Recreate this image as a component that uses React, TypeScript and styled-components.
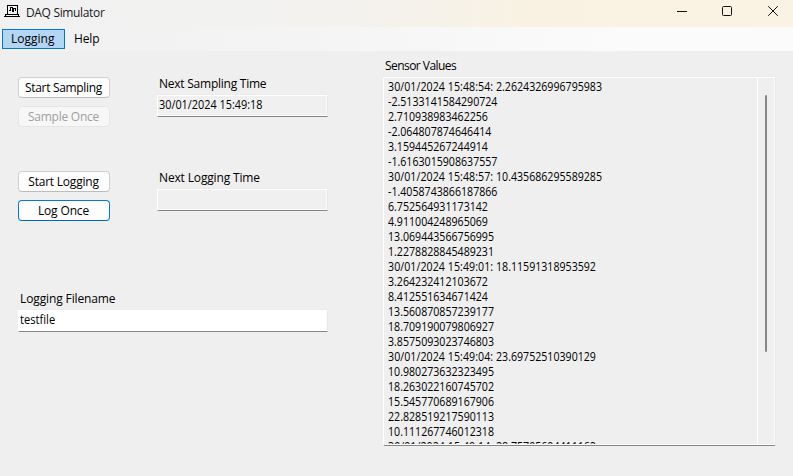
import React from 'react';
import styled, { createGlobalStyle, css } from 'styled-components';

const Global = createGlobalStyle`
  * { box-sizing: border-box; }
  body { margin: 0; background: #f0f0f0; overflow: hidden; }
  button, input { font: inherit; color: inherit; }
`;

const Window = styled.div`
  width: 793px;
  height: 476px;
  display: flex;
  flex-direction: column;
  background: #efefef;
  color: #000;
  font: 12px/15px "Open Sans", "Noto Sans", sans-serif;
`;

const TitleBar = styled.header`
  height: 27px;
  flex: none;
  display: flex;
  align-items: center;
  background: linear-gradient(90deg, #f1f1f1 0, #f2f2f1 240px, #f5f2ec 400px, #f9f2e3 530px, #faf2e2 100%);
`;

const AppIcon = styled.svg`
  width: 16px;
  height: 13px;
  margin: 0 6px 4px 4px;
`;

const Title = styled.span`
  flex: 1;
  letter-spacing: -0.34px;
  padding-bottom: 3px;
  color: #1a1a1a;
`;

const WindowControls = styled.svg`
  width: 116px;
  height: 22px;
  margin-bottom: 5px;
`;

const MenuBar = styled.nav`
  height: 24px;
  flex: none;
  display: flex;
  padding: 2px 0 2px 2px;
  background: linear-gradient(90deg, #f1f1f1 0, #f2f2f2 170px, #f8f8f8 480px, #fbfbfb 640px, #fbfbfb 100%);
`;

const MenuItem = styled.div<{ $active?: boolean; $spacing?: number }>`
  height: 20px;
  padding: 1px 8px;
  border: 1px solid transparent;
  white-space: pre;
  letter-spacing: ${(p) => p.$spacing ?? 0}px;
  ${(p) => p.$active && css`
    width: 63px;
    border-color: #0078d7;
    background: #b3d7f3;
  `}
`;

const Content = styled.main`
  flex: 1;
  min-height: 0;
  display: grid;
  grid-template-columns: 310px 393px;
  column-gap: 55px;
  padding-left: 18px;
`;

const Controls = styled.section`
  display: flex;
  flex-direction: column;
`;

const ControlRow = styled.div`
  height: 94px;
  display: grid;
  grid-template-columns: 92px 171px;
  column-gap: 47px;
  &:first-child { margin-top: 25px; }
`;

const ButtonStack = styled.div`
  display: flex;
  flex-direction: column;
  gap: 8px;
  padding-top: 1px;
`;

const Button = styled.button<{ $focus?: boolean; $spacing: number }>`
  width: 92px;
  height: 21px;
  padding: 1px 1px 0 0;
  border: 1px solid ${(p) => (p.$focus ? '#0078d4' : '#d0d0d0')};
  border-bottom-color: ${(p) => (p.$focus ? '#0067c0' : '#bcbcbc')};
  border-radius: 4px;
  background: #fdfdfd;
  line-height: 18px;
  letter-spacing: ${(p) => p.$spacing}px;
  white-space: pre;
  &:disabled {
    color: #a0a0a0;
    background: #f7f7f7;
    border-color: #e6e6e6;
  }
`;

const Field = styled.label`
  display: flex;
  flex-direction: column;
`;

const Label = styled.span<{ $spacing: number }>`
  height: 19px;
  padding-left: 2px;
  letter-spacing: ${(p) => p.$spacing}px;
  white-space: pre;
`;

const TextBox = styled.span<{ $editable?: boolean }>`
  height: 22px;
  padding: 1px 1px;
  border: 1px solid #fff;
  border-right-color: #e8e8e8;
  border-bottom-color: #868686;
  border-radius: 1px;
  background: ${(p) => (p.$editable ? '#fff' : '#f0f0f0')};
  box-shadow: inset 0 -1px #fff, inset -1px 0 #fbfbfb, 0 -1px #ebebeb;
`;

/* Digits are condensed to the widths of the native window font. */
const Condensed = styled.span<{ $scale: number }>`
  display: block;
  width: max-content;
  white-space: pre;
  transform: scaleX(${(p) => p.$scale});
  transform-origin: 0 0;
`;

const FileField = styled(Field)`
  margin-top: 27px;
`;

const SensorPanel = styled(Field).attrs({ as: 'section' })`
  padding-top: 7px;
`;

const ListBox = styled.div`
  width: 393px;
  height: 369px;
  display: flex;
  border: 1px solid #fff;
  border-right-color: #e8e8e8;
  border-bottom-color: #868686;
  border-radius: 2px;
  box-shadow: inset 0 -1px #fff, inset -1px 0 #fbfbfb, 0 -1px #ebebeb;
`;

const Lines = styled.div`
  width: 373px;
  height: 366px;
  padding: 1px 0 0 4px;
  overflow: hidden;
`;

const Stamp = styled.span`
  letter-spacing: 0.07px;
`;

const ScrollTrack = styled.div`
  width: 18px;
  height: 366px;
  padding: 17px 0 0 7px;
  border-left: 1px solid #fff;
`;

const ScrollThumb = styled.div`
  width: 2px;
  height: 257px;
  border-radius: 1px;
  background: #868686;
`;

const readings: [string, string[]][] = [
  ['30/01/2024 15:48:54:', ['2.2624326996795983', '-2.5133141584290724', '2.710938983462256', '-2.064807874646414', '3.159445267244914', '-1.6163015908637557']],
  ['30/01/2024 15:48:57:', ['10.435686295589285', '-1.4058743866187866', '6.752564931173142', '4.911004248965069', '13.069443566756995', '1.2278828845489231']],
  ['30/01/2024 15:49:01:', ['18.11591318953592', '3.264232412103672', '8.412551634671424', '13.560870857239177', '18.709190079806927', '3.8575093023746803']],
  ['30/01/2024 15:49:04:', ['23.69752510390129', '10.980273632323495', '18.263022160745702', '15.545770689167906', '22.828519217590113', '10.111267746012318']],
  ['30/01/2024 15:49:14:', ['28.75705604411162']],
];

export default function App() {
  return (
    <Window>
      <Global />
      <TitleBar>
        <AppIcon viewBox="0 0 16 13" fill="none" stroke="#000" shapeRendering="crispEdges">
          <path d="M3.5 9.5V.5h10v9" />
          <path d="M1.5 11.5v-2h13v2M0 11.5h16" />
          <path d="M4.5 5.5h2v-3h2v4h1v-3h2v2" />
        </AppIcon>
        <Title>DAQ Simulator</Title>
        <WindowControls viewBox="0 0 116 22" fill="none" stroke="#111">
          <path d="M0 11.5h10" shapeRendering="crispEdges" />
          <rect x="45.5" y="6.5" width="9" height="9" rx="1" />
          <path d="M91.2 6.2l9.6 9.6M100.8 6.2l-9.6 9.6" />
        </WindowControls>
      </TitleBar>
      <MenuBar>
        <MenuItem $active>Logging</MenuItem>
        <MenuItem $spacing={-0.15}>Help</MenuItem>
      </MenuBar>
      <Content>
        <Controls>
          <ControlRow>
            <ButtonStack>
              <Button $spacing={-0.32}>Start Sampling</Button>
              <Button $spacing={-0.25} disabled>Sample Once</Button>
            </ButtonStack>
            <Field>
              <Label $spacing={-0.24}>Next Sampling Time</Label>
              <TextBox><Condensed $scale={0.905}>30/01/2024 15:49:18</Condensed></TextBox>
            </Field>
          </ControlRow>
          <ControlRow>
            <ButtonStack>
              <Button $spacing={-0.22}>Start Logging</Button>
              <Button $spacing={-0.15} $focus>Log Once</Button>
            </ButtonStack>
            <Field>
              <Label $spacing={-0.15}>Next Logging Time</Label>
              <TextBox />
            </Field>
          </ControlRow>
          <FileField>
            <Label $spacing={-0.12}>Logging Filename</Label>
            <TextBox $editable><Condensed $scale={0.93}>testfile</Condensed></TextBox>
          </FileField>
        </Controls>
        <SensorPanel>
          <Label $spacing={-0.55}>Sensor Values</Label>
          <ListBox>
            <Lines>
              {readings.map(([stamp, values]) =>
                values.map((value, i) => (
                  <Condensed key={value} $scale={0.885}>
                    {i === 0 && <Stamp>{stamp} </Stamp>}
                    {value}
                  </Condensed>
                )),
              )}
            </Lines>
            <ScrollTrack><ScrollThumb /></ScrollTrack>
          </ListBox>
        </SensorPanel>
      </Content>
    </Window>
  );
}
